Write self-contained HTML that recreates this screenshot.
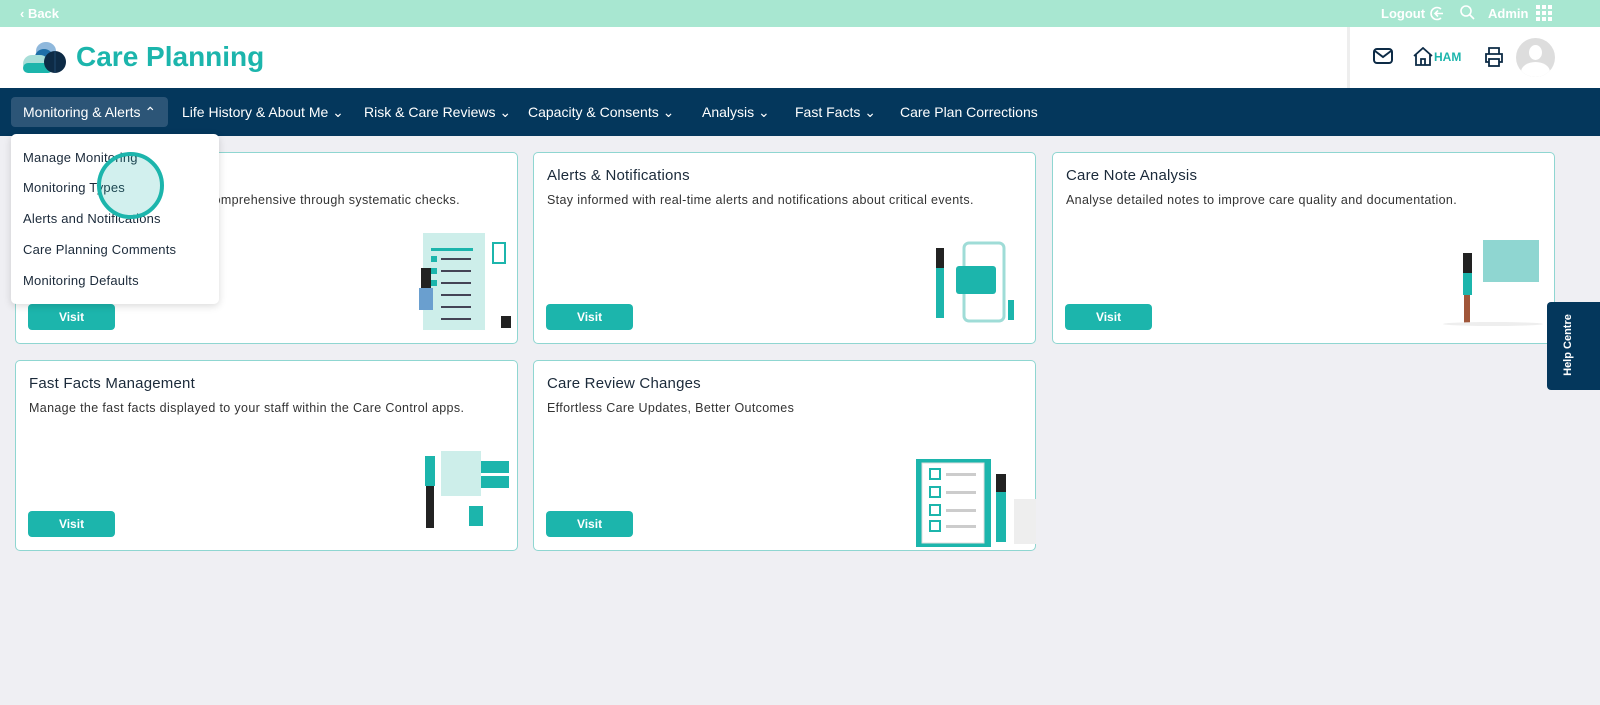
<!DOCTYPE html>
<html><head><meta charset="utf-8"><style>
*{box-sizing:border-box;margin:0;padding:0}
body{width:1600px;height:705px;overflow:hidden;background:#efeff3;font-family:"Liberation Sans",sans-serif;position:relative;color:#1b2a3a}
.top{position:absolute;left:0;top:0;width:1600px;height:27px;background:#a8e7d1;color:#fff;font-size:13px;font-weight:bold}
.hdr{position:absolute;left:0;top:27px;width:1600px;height:61px;background:#fff}
.nav{position:absolute;left:0;top:88px;width:1600px;height:48px;background:#04375c;color:#fff;font-size:14px}
.nav span{position:absolute;top:16px;white-space:nowrap}
.card{position:absolute;background:#fff;border:1px solid #8fd6d1;border-radius:5px}
.card h3{position:absolute;left:13px;top:14px;font-size:15px;font-weight:normal;color:#1b2a3a;letter-spacing:.2px}
.card p{position:absolute;left:13px;top:40px;font-size:12.5px;color:#333;letter-spacing:.35px;white-space:nowrap}
.btn{position:absolute;left:12px;bottom:13px;width:87px;height:26px;background:#1cb5ac;border-radius:4px;color:#fff;font-weight:bold;font-size:12px;text-align:center;line-height:26px}
.dd{position:absolute;left:11px;top:134px;width:208px;height:170px;background:#fff;border-radius:5px;box-shadow:0 2px 8px rgba(0,0,0,.15);font-size:13px;color:#1b2a3a;letter-spacing:.2px}
.dd div{position:absolute;left:12px}
</style></head><body>
<div class="top"><span style="position:absolute;left:20px;top:6px">‹ Back</span>
<span style="position:absolute;left:1381px;top:6px">Logout</span>
<svg style="position:absolute;left:1430px;top:6px" width="15" height="15" viewBox="0 0 15 15" fill="none" stroke="#fff" stroke-width="1.6"><path d="M11 3A6 6 0 1 0 11 12"/><path d="M13 7.5H5M8 4.5L5 7.5 8 10.5"/></svg>
<svg style="position:absolute;left:1460px;top:5px" width="15" height="15" viewBox="0 0 15 15" fill="none" stroke="#fff" stroke-width="1.6"><circle cx="6" cy="6" r="5"/><path d="M10 10l4 4"/></svg>
<span style="position:absolute;left:1488px;top:6px">Admin</span>
<svg style="position:absolute;left:1536px;top:5px" width="16" height="16" fill="#fff"><rect x="0" y="0" width="4" height="4"/><rect x="6" y="0" width="4" height="4"/><rect x="12" y="0" width="4" height="4"/><rect x="0" y="6" width="4" height="4"/><rect x="6" y="6" width="4" height="4"/><rect x="12" y="6" width="4" height="4"/><rect x="0" y="12" width="4" height="4"/><rect x="6" y="12" width="4" height="4"/><rect x="12" y="12" width="4" height="4"/></svg>
</div>
<div class="hdr">
<svg style="position:absolute;left:22px;top:14px" width="46" height="34" viewBox="0 0 46 34"><ellipse cx="24" cy="10" rx="10" ry="9" fill="#8fb8dc"/><ellipse cx="22" cy="16" rx="9" ry="8" fill="#1e6fa8"/><rect x="1" y="14" width="26" height="18" rx="9" fill="#a8ded8"/><rect x="1" y="22" width="30" height="10" rx="5" fill="#1cb5ac"/><circle cx="33" cy="21" r="11" fill="#0d2b46"/><path d="M33 10v22" stroke="#1e4a6e" stroke-width="1"/></svg>
<span style="position:absolute;left:76px;top:14px;font-size:28px;font-weight:bold;color:#1cb5ac">Care Planning</span>
<div style="position:absolute;left:1347px;top:0;width:3px;height:61px;background:#eee"></div>
<svg style="position:absolute;left:1373px;top:21px" width="20" height="16" viewBox="0 0 20 16" fill="none" stroke="#0d2b46" stroke-width="2"><rect x="1" y="1" width="18" height="14" rx="3"/><path d="M2 3l8 6 8-6"/></svg>
<svg style="position:absolute;left:1413px;top:20px" width="20" height="19" viewBox="0 0 20 19" fill="none" stroke="#0d2b46" stroke-width="1.8"><path d="M1 9L10 1l9 8M3 7v11h14V7M8 18v-6h4v6"/></svg>
<span style="position:absolute;left:1434px;top:23px;font-size:12px;font-weight:bold;color:#1cb5ac">HAM</span>
<svg style="position:absolute;left:1484px;top:20px" width="20" height="20" viewBox="0 0 20 20" fill="none" stroke="#0d2b46" stroke-width="1.8"><path d="M5 7V1h10v6M5 15H2V7h16v8h-3"/><rect x="5" y="12" width="10" height="7"/></svg>
<div style="position:absolute;left:1516px;top:11px;width:39px;height:39px;border-radius:50%;background:#ddd;overflow:hidden"><div style="position:absolute;left:13px;top:7px;width:13px;height:15px;border-radius:50%;background:#fff"></div><div style="position:absolute;left:5px;top:24px;width:29px;height:20px;border-radius:50%;background:#fff"></div></div>
</div>
<div class="nav">
<div style="position:absolute;left:11px;top:9px;width:157px;height:30px;background:#2c5577;border-radius:4px"></div>
<span style="left:23px">Monitoring &amp; Alerts ⌃</span>
<span style="left:182px">Life History &amp; About Me ⌄</span>
<span style="left:364px">Risk &amp; Care Reviews ⌄</span>
<span style="left:528px">Capacity &amp; Consents ⌄</span>
<span style="left:702px">Analysis ⌄</span>
<span style="left:795px">Fast Facts ⌄</span>
<span style="left:900px">Care Plan Corrections</span>
</div>
<div class="card" style="left:15px;top:152px;width:503px;height:192px"><p style="left:13px">Ensure care is consistent and comprehensive through systematic checks.</p>
<svg style="position:absolute;left:385px;top:75px" width="110" height="105"><rect x="22" y="5" width="62" height="97" fill="#cdeeea"/><rect x="30" y="20" width="42" height="3" fill="#1cb5ac"/><g fill="#1cb5ac"><rect x="30" y="28" width="6" height="6"/><rect x="30" y="40" width="6" height="6"/><rect x="30" y="52" width="6" height="6"/></g><g fill="#445"><rect x="40" y="30" width="30" height="2"/><rect x="40" y="42" width="30" height="2"/><rect x="40" y="54" width="30" height="2"/><rect x="40" y="66" width="30" height="2"/><rect x="40" y="78" width="30" height="2"/><rect x="40" y="90" width="30" height="2"/></g><rect x="92" y="15" width="12" height="20" fill="none" stroke="#1cb5ac" stroke-width="2"/><rect x="20" y="40" width="10" height="25" fill="#222"/><rect x="18" y="60" width="14" height="22" fill="#6a9fcf"/><rect x="100" y="88" width="10" height="12" fill="#222"/></svg>
<div class="btn">Visit</div></div>
<div class="card" style="left:533px;top:152px;width:503px;height:192px"><h3>Alerts &amp; Notifications</h3><p>Stay informed with real-time alerts and notifications about critical events.</p>
<svg style="position:absolute;left:390px;top:85px" width="110" height="90"><rect x="40" y="5" width="40" height="78" rx="5" fill="none" stroke="#9fdcd7" stroke-width="3"/><rect x="32" y="28" width="40" height="28" rx="3" fill="#1cb5ac"/><rect x="12" y="10" width="8" height="20" fill="#222"/><rect x="12" y="30" width="8" height="50" fill="#1cb5ac"/><rect x="84" y="62" width="6" height="20" fill="#1cb5ac"/></svg>
<div class="btn">Visit</div></div>
<div class="card" style="left:1052px;top:152px;width:503px;height:192px"><h3>Care Note Analysis</h3><p>Analyse detailed notes to improve care quality and documentation.</p>
<svg style="position:absolute;left:390px;top:85px" width="110" height="90"><rect x="40" y="2" width="56" height="42" fill="#8fd6d1"/><rect x="20" y="15" width="9" height="20" fill="#222"/><rect x="20" y="35" width="9" height="22" fill="#1cb5ac"/><rect x="21" y="57" width="6" height="28" fill="#a0563a"/><ellipse cx="50" cy="86" rx="50" ry="2" fill="#eee"/></svg>
<div class="btn">Visit</div></div>
<div class="card" style="left:15px;top:360px;width:503px;height:191px"><h3>Fast Facts Management</h3><p>Manage the fast facts displayed to your staff within the Care Control apps.</p>
<svg style="position:absolute;left:395px;top:85px" width="100" height="90"><rect x="30" y="5" width="40" height="45" fill="#cdeeea"/><rect x="70" y="15" width="28" height="12" fill="#1cb5ac"/><rect x="70" y="30" width="28" height="12" fill="#1cb5ac"/><rect x="14" y="10" width="10" height="30" fill="#1cb5ac"/><rect x="15" y="40" width="8" height="42" fill="#222"/><rect x="58" y="60" width="14" height="20" fill="#1cb5ac"/></svg>
<div class="btn">Visit</div></div>
<div class="card" style="left:533px;top:360px;width:503px;height:191px"><h3>Care Review Changes</h3><p>Effortless Care Updates, Better Outcomes</p>
<svg style="position:absolute;left:380px;top:88px" width="125" height="102"><rect x="2" y="10" width="75" height="88" fill="#1cb5ac"/><rect x="8" y="14" width="62" height="80" fill="#fff" stroke="#ddd"/><g fill="none" stroke="#1cb5ac" stroke-width="2"><rect x="16" y="20" width="10" height="10"/><rect x="16" y="38" width="10" height="10"/><rect x="16" y="56" width="10" height="10"/><rect x="16" y="72" width="10" height="10"/></g><g fill="#ccc"><rect x="32" y="24" width="30" height="3"/><rect x="32" y="42" width="30" height="3"/><rect x="32" y="60" width="30" height="3"/><rect x="32" y="76" width="30" height="3"/></g><rect x="82" y="25" width="10" height="18" fill="#222"/><rect x="82" y="43" width="10" height="50" fill="#1cb5ac"/><rect x="100" y="50" width="22" height="45" fill="#eee"/></svg>
<div class="btn">Visit</div></div>
<div class="dd">
<div style="top:16px">Manage Monitoring</div>
<div style="top:46px">Monitoring Types</div>
<div style="top:77px">Alerts and Notifications</div>
<div style="top:108px">Care Planning Comments</div>
<div style="top:139px">Monitoring Defaults</div>
</div>
<div style="position:absolute;left:97px;top:152px;width:67px;height:67px;border-radius:50%;border:4px solid #1cb5ac;background:rgba(28,181,172,.2)"></div>
<div style="position:absolute;left:1547px;top:302px;width:53px;height:88px;background:#04375c;border-radius:4px 0 0 4px"><span style="position:absolute;left:-10px;top:37px;transform:rotate(-90deg);color:#fff;font-size:11px;font-weight:bold;white-space:nowrap">Help Centre</span></div>
</body></html>
